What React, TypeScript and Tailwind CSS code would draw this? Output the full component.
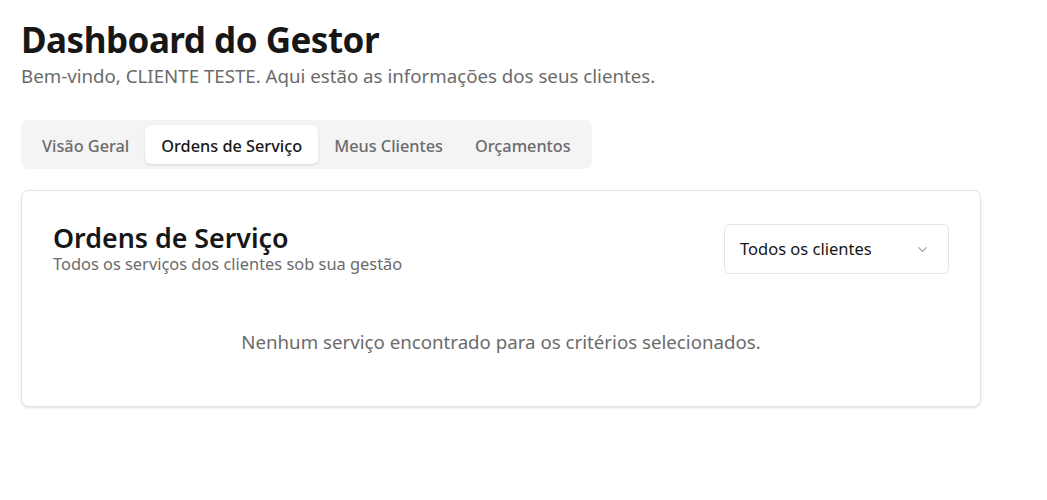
import React from "react";

const tabs: string[] = ["Visão Geral", "Ordens de Serviço", "Meus Clientes", "Orçamentos"];

const App = () => {
  const active = "Ordens de Serviço";

  return (
    <div
      className="min-h-screen bg-white text-[#171717] px-[21px] pt-[18px]"
      style={{ fontFamily: '"Noto Sans", "Open Sans", sans-serif' }}
    >
      <h1 className="text-[35px] leading-[44px] font-bold tracking-[-0.5px]">Dashboard do Gestor</h1>
      <p className="text-[18.7px] leading-[28px] text-[#6b6b6b]">
        Bem-vindo, CLIENTE TESTE. Aqui estão as informações dos seus clientes.
      </p>

      <div className="mt-[30px] inline-flex h-[49px] items-center rounded-lg bg-[#f4f4f5] p-[5px]">
        {tabs.map((tab) => (
          <button
            key={tab}
            className={
              tab === active
                ? "h-[39px] rounded-md bg-white px-[16px] pt-[4px] text-[16.3px] font-medium text-[#171717] shadow-sm"
                : "h-[39px] rounded-md px-[16px] pt-[4px] text-[16.3px] font-medium text-[#6b6b6b]"
            }
          >
            {tab}
          </button>
        ))}
      </div>

      <div className="mt-[21px] w-[960px] rounded-lg border border-[#e5e5e5] bg-white px-[31px] pt-[32px] pb-[51px] shadow-sm">
        <div className="flex items-start justify-between">
          <div>
            <h2 className="text-[26.8px] leading-[30px] font-semibold">Ordens de Serviço</h2>
            <p className="text-[16.4px] leading-[22px] text-[#6b6b6b]">
              Todos os serviços dos clientes sob sua gestão
            </p>
          </div>
          <button className="mt-[1px] flex h-[50px] w-[225px] items-center justify-between rounded-md border border-[#e5e5e5] bg-white pl-[15px] pr-[18px] text-[16.5px] text-[#171717]">
            <span>Todos os clientes</span>
            <svg width="15" height="15" viewBox="0 0 24 24" fill="none" stroke="#9a9a9a" strokeWidth="1.8" strokeLinecap="round" strokeLinejoin="round">
              <path d="m6 9 6 6 6-6" />
            </svg>
          </button>
        </div>
        <p className="mt-[53px] text-center text-[18.7px] leading-[27px] text-[#6b6b6b]">
          Nenhum serviço encontrado para os critérios selecionados.
        </p>
      </div>
    </div>
  );
};

export default App;
